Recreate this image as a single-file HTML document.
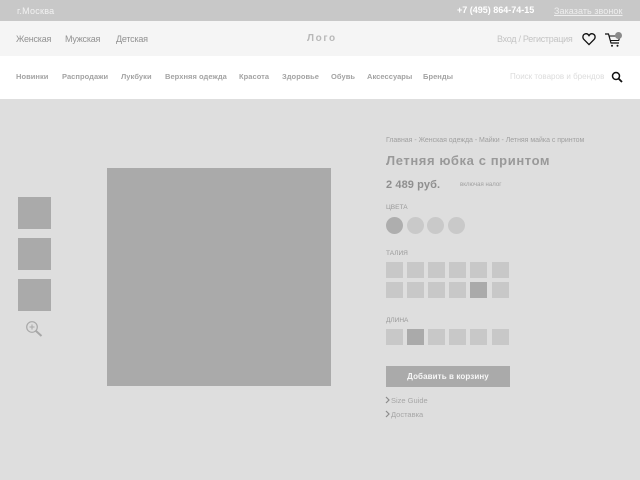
<!DOCTYPE html>
<html lang="ru"><head><meta charset="utf-8"><title>Товар</title>
<style>
html,body{margin:0;padding:0}
body{width:640px;height:480px;position:relative;overflow:hidden;background:#dedede;font-family:"Liberation Sans",sans-serif}
.r{position:absolute}
.t{position:absolute;white-space:nowrap;line-height:12px}
.n{font-size:7.5px;font-weight:700;color:#a3a3a3;letter-spacing:.05px;top:71px}
.m{font-size:9px;font-weight:400;color:#929292;letter-spacing:-.22px;top:33px}
.l{font-size:6.5px;color:#999;letter-spacing:0}
.s{background:#c8c8c8;width:17px;height:16px}
.d{background:#aaa}
.c{position:absolute;top:217px;width:17px;height:17px;border-radius:50%;background:#c9c9c9}
.g{background:#aaa;position:absolute}
</style></head><body>
<div class="r" style="left:0;top:0;width:640px;height:21px;background:#c8c8c8"></div>
<div class="r" style="left:0;top:21px;width:640px;height:35px;background:#f5f5f5"></div>
<div class="r" style="left:0;top:56px;width:640px;height:43px;background:#fff"></div>

<div class="t" style="left:17px;top:5px;font-size:9px;color:#f2f2f2;letter-spacing:.25px;font-weight:400">г.Москва</div>
<div class="t" style="left:457px;top:4px;font-size:9px;color:#fff;font-weight:700;letter-spacing:0">+7 (495) 864-74-15</div>
<div class="t" style="left:554px;top:5px;font-size:9px;color:#eee;letter-spacing:.07px;text-decoration:underline">Заказать звонок</div>

<div class="t m" style="left:16px">Женская</div>
<div class="t m" style="left:65px">Мужская</div>
<div class="t m" style="left:116px">Детская</div>
<div class="t" style="left:307px;top:33px;font-size:10px;font-weight:700;color:#b8b8b8;letter-spacing:1.6px">Лого</div>
<div class="t" style="left:497px;top:33px;font-size:9px;color:#c4c4c4;letter-spacing:-.28px">Вход / Регистрация</div>

<svg class="r" style="left:582px;top:32px" width="14" height="14" viewBox="0 0 14 14"><path d="M7 12.600 1.900 7.400C.3 5.700.7 3 2.600 2.100 4.300 1.300 6 2 7 3.600 8 2 9.700 1.300 11.400 2.100 13.300 3 13.700 5.700 12.100 7.400Z" fill="none" stroke="#111" stroke-width="1.300"/></svg>
<svg class="r" style="left:604px;top:32px" width="20" height="16" viewBox="0 0 20 16"><path d="M1 2H4.500L7 11H15" fill="none" stroke="#111" stroke-width="1.200"/><path d="M5 4H16L14.700 8.500H6.300" fill="none" stroke="#111" stroke-width="1.100"/><circle cx="8" cy="13.700" r="1" fill="#111"/><circle cx="13.500" cy="13.700" r="1" fill="#111"/><circle cx="14.500" cy="3.500" r="3.500" fill="#8a8a8a"/></svg>

<div class="t n" style="left:16px">Новинки</div>
<div class="t n" style="left:62px">Распродажи</div>
<div class="t n" style="left:121px">Лукбуки</div>
<div class="t n" style="left:165px">Верхняя одежда</div>
<div class="t n" style="left:239px">Красота</div>
<div class="t n" style="left:282px">Здоровье</div>
<div class="t n" style="left:331px">Обувь</div>
<div class="t n" style="left:367px">Аксессуары</div>
<div class="t n" style="left:423px">Бренды</div>
<div class="t" style="left:510px;top:71px;font-size:8px;color:#dcdcdc;letter-spacing:0">Поиск товаров и брендов</div>
<svg class="r" style="left:611px;top:71px" width="12" height="12" viewBox="0 0 12 12"><circle cx="5" cy="5" r="3.500" fill="none" stroke="#111" stroke-width="1.500"/><path d="M7.600 7.600 11 11" stroke="#111" stroke-width="1.800"/></svg>

<div class="g" style="left:18px;top:197px;width:33px;height:32px"></div>
<div class="g" style="left:18px;top:238px;width:33px;height:32px"></div>
<div class="g" style="left:18px;top:279px;width:33px;height:32px"></div>
<svg class="r" style="left:25px;top:320px" width="18" height="18" viewBox="0 0 18 18"><circle cx="7" cy="7" r="5.300" fill="none" stroke="#a8a8a8" stroke-width="1.200"/><path d="M7 4.500V9.500M4.500 7H9.500" stroke="#a8a8a8" stroke-width="1"/><path d="M11 11 16.500 16" stroke="#a8a8a8" stroke-width="2"/></svg>
<div class="g" style="left:107px;top:168px;width:224px;height:218px"></div>

<div class="t" style="left:386px;top:135px;font-size:7px;color:#a0a0a0;letter-spacing:-.03px">Главная - Женская одежда - Майки - Летняя майка с принтом</div>
<div class="t" style="left:386px;top:155px;font-size:13px;font-weight:700;color:#999;letter-spacing:.6px">Летняя юбка с принтом</div>
<div class="t" style="left:386px;top:179px;font-size:11px;font-weight:700;color:#8f8f8f;letter-spacing:.1px">2 489 руб.</div>
<div class="t" style="left:460px;top:179px;font-size:6px;color:#a0a0a0;letter-spacing:.05px">включая налог</div>
<div class="t l" style="left:386px;top:202px">ЦВЕТА</div>
<div class="c" style="left:386px;background:#aeaeae"></div><div class="c" style="left:407px"></div><div class="c" style="left:427px"></div><div class="c" style="left:448px"></div>

<div class="t l" style="left:386px;top:248px">ТАЛИЯ</div>
<div class="r s" style="left:386px;top:262px"></div><div class="r s" style="left:407px;top:262px"></div><div class="r s" style="left:428px;top:262px"></div><div class="r s" style="left:449px;top:262px"></div><div class="r s" style="left:470px;top:262px"></div><div class="r s" style="left:492px;top:262px"></div>
<div class="r s" style="left:386px;top:282px"></div><div class="r s" style="left:407px;top:282px"></div><div class="r s" style="left:428px;top:282px"></div><div class="r s" style="left:449px;top:282px"></div><div class="r s d" style="left:470px;top:282px"></div><div class="r s" style="left:492px;top:282px"></div>

<div class="t l" style="left:386px;top:315px">ДЛИНА</div>
<div class="r s" style="left:386px;top:329px"></div><div class="r s d" style="left:407px;top:329px"></div><div class="r s" style="left:428px;top:329px"></div><div class="r s" style="left:449px;top:329px"></div><div class="r s" style="left:470px;top:329px"></div><div class="r s" style="left:492px;top:329px"></div>

<div class="g" style="left:386px;top:366px;width:124px;height:21px"></div>
<div class="t" style="left:386px;top:371px;width:124px;text-align:center;font-size:8px;font-weight:700;color:#f7f7f7;letter-spacing:.1px">Добавить в корзину</div>

<svg class="r" style="left:385px;top:396px" width="5" height="8" viewBox="0 0 5 8"><path d="M1 1 4 4 1 7" fill="none" stroke="#8c8c8c" stroke-width="1.200"/></svg>
<div class="t" style="left:391px;top:395px;font-size:7.5px;color:#a6a6a6;letter-spacing:0">Size Guide</div>
<svg class="r" style="left:385px;top:410px" width="5" height="8" viewBox="0 0 5 8"><path d="M1 1 4 4 1 7" fill="none" stroke="#8c8c8c" stroke-width="1.200"/></svg>
<div class="t" style="left:391px;top:409px;font-size:7.5px;color:#a6a6a6;letter-spacing:0">Доставка</div>
</body></html>
